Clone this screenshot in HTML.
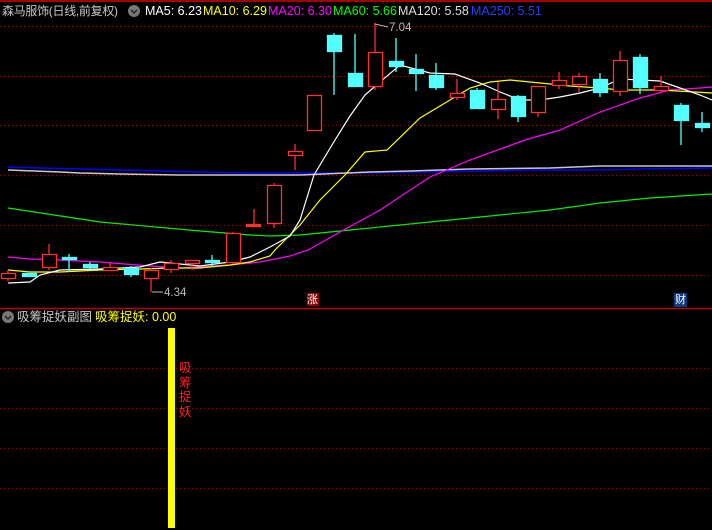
<!DOCTYPE html>
<html><head><meta charset="utf-8"><style>
body{margin:0;background:#000;width:712px;height:530px;overflow:hidden;position:relative;font-family:"Liberation Sans","Noto Sans CJK SC",sans-serif;}
.t{position:absolute;font-size:12.5px;white-space:nowrap;line-height:14px;}
</style></head><body>
<svg width="712" height="530" style="position:absolute;left:0;top:0">
<line x1="0" y1="1" x2="712" y2="1" stroke="#a00000" stroke-width="2"/>
<g stroke="#900" stroke-dasharray="1,3" stroke-width="1">
<line x1="0" y1="26.5" x2="712" y2="26.5"/><line x1="0" y1="76.5" x2="712" y2="76.5"/>
<line x1="0" y1="125.5" x2="712" y2="125.5"/><line x1="0" y1="175.5" x2="712" y2="175.5"/>
<line x1="0" y1="225.5" x2="712" y2="225.5"/><line x1="0" y1="275.5" x2="712" y2="275.5"/>
<line x1="0" y1="368.5" x2="712" y2="368.5"/><line x1="0" y1="408.5" x2="712" y2="408.5"/>
<line x1="0" y1="448.5" x2="712" y2="448.5"/><line x1="0" y1="488.5" x2="712" y2="488.5"/>
</g>
<line x1="0" y1="308.5" x2="712" y2="308.5" stroke="#c00000" stroke-width="1.5"/>
<g fill="none" stroke-width="1.2">
<polyline stroke="#0000ff" stroke-width="1.5" points="8,167 40,168 80,169 120,170 160,171 200,172 245,173 300,173 360,173 420,172 480,171 530,170 590,170 640,169 712,168"/>
<polyline stroke="#c8c8c8" stroke-width="1.5" points="8,170 60,172 80,173 120,174 180,175 300,175 370,172 410,171 470,169 550,168 600,166 640,166 712,166"/>
<polyline stroke="#00ee00" points="8,208 100,222 200,231 250,235 270,236 300,235 350,230 400,225 450,220 500,215 550,210 600,203 650,198 712,194"/>
<polyline stroke="#ff00ff" points="8,257 30,259 60,260 100,262 150,266 180,268 230,265 260,262 290,256 308,250 340,232 380,210 430,177 470,160 525,140 560,130 600,112 640,98 670,90 700,88 712,87"/>
<polyline stroke="#ffff00" points="8,270 30,272 60,272 100,270 140,269 170,268 200,268 230,265 250,262 270,256 275,250 300,225 320,200 345,175 365,152 387,150 420,118 450,100 470,88 490,82 510,80 540,83 570,86 600,88 620,90 660,90 712,93"/>
<polyline stroke="#ffffff" points="8,283 30,282 40,275 60,270 100,269 140,267 160,262 200,266 230,262 250,257 270,247 290,236 300,220 314,175 335,140 350,116 365,95 380,82 400,65 430,73 455,74 480,83 500,92 520,100 540,100 560,97 580,93 600,88 620,79 640,80 660,81 680,88 700,95 712,100"/>
</g>
<g stroke-width="1.3">
<g fill="#000" stroke="#ff3030">
<line x1="8" y1="270" x2="8" y2="281"/><rect x="1.5" y="273.5" width="14" height="5"/>
<line x1="49" y1="244" x2="49" y2="270"/><rect x="42.5" y="254.5" width="14" height="13"/>
<line x1="110" y1="263" x2="110" y2="269"/><rect x="103.5" y="267.5" width="14" height="3"/>
<line x1="151" y1="268" x2="151" y2="292"/><rect x="144.5" y="270.5" width="14" height="8"/>
<line x1="171" y1="260" x2="171" y2="273"/><rect x="164.5" y="263.5" width="14" height="6"/>
<line x1="192" y1="260" x2="192" y2="270"/><rect x="185.5" y="260.5" width="14" height="3"/>
<line x1="233" y1="232" x2="233" y2="264"/><rect x="226.5" y="233.5" width="14" height="29"/>
<line x1="254" y1="209" x2="254" y2="226"/><rect x="246.5" y="224.5" width="14" height="2" fill="#ff3030"/>
<line x1="274" y1="183" x2="274" y2="228"/><rect x="267.5" y="185.5" width="14" height="38"/>
<line x1="295" y1="144" x2="295" y2="170"/><rect x="288.5" y="151.5" width="14" height="4"/>
<rect x="307.5" y="95.5" width="14" height="35"/>
<line x1="375" y1="23" x2="375" y2="90"/><rect x="368.5" y="52.5" width="14" height="34"/>
<line x1="457" y1="79" x2="457" y2="100"/><rect x="450.5" y="93.5" width="14" height="4"/>
<line x1="498" y1="82" x2="498" y2="119"/><rect x="491.5" y="99.5" width="14" height="10"/>
<line x1="538" y1="86" x2="538" y2="117"/><rect x="531.5" y="86.5" width="14" height="26"/>
<line x1="559" y1="72" x2="559" y2="89"/><rect x="552.5" y="80.5" width="14" height="5"/>
<line x1="579" y1="73" x2="579" y2="92"/><rect x="572.5" y="76.5" width="14" height="8"/>
<line x1="620" y1="51" x2="620" y2="96"/><rect x="613.5" y="60.5" width="14" height="31"/>
<line x1="661" y1="76" x2="661" y2="92"/><rect x="654.5" y="86.5" width="14" height="4"/>
</g>
<g fill="#54ffff" stroke="#54ffff">
<rect x="22.5" y="273.5" width="14" height="3"/>
<line x1="69" y1="254" x2="69" y2="272"/><rect x="62.5" y="257.5" width="14" height="2"/>
<line x1="90" y1="262" x2="90" y2="269"/><rect x="83.5" y="264.5" width="14" height="3"/>
<line x1="131" y1="266" x2="131" y2="277"/><rect x="124.5" y="268.5" width="14" height="6"/>
<line x1="212" y1="255" x2="212" y2="266"/><rect x="205.5" y="260.5" width="14" height="2"/>
<line x1="334" y1="33" x2="334" y2="95"/><rect x="327.5" y="35.5" width="14" height="16"/>
<line x1="355" y1="34" x2="355" y2="86"/><rect x="348.5" y="73.5" width="14" height="13"/>
<line x1="396" y1="38" x2="396" y2="72"/><rect x="389.5" y="61.5" width="14" height="5"/>
<line x1="416" y1="54" x2="416" y2="91"/><rect x="409.5" y="69.5" width="14" height="4"/>
<line x1="436" y1="63" x2="436" y2="90"/><rect x="429.5" y="75.5" width="14" height="12"/>
<line x1="477" y1="88" x2="477" y2="108"/><rect x="470.5" y="90.5" width="14" height="18"/>
<line x1="518" y1="95" x2="518" y2="122"/><rect x="511.5" y="96.5" width="14" height="20"/>
<line x1="600" y1="73" x2="600" y2="97"/><rect x="593.5" y="79.5" width="14" height="13"/>
<line x1="640" y1="54" x2="640" y2="94"/><rect x="633.5" y="57.5" width="14" height="30"/>
<line x1="681" y1="103" x2="681" y2="145"/><rect x="674.5" y="105.5" width="14" height="15"/>
<line x1="702" y1="112" x2="702" y2="132"/><rect x="695.5" y="123.5" width="14" height="4"/>
</g>
</g>
<g stroke="#bbb" fill="none" stroke-width="1"><line x1="152" y1="292" x2="163" y2="292"/><line x1="375" y1="24" x2="388" y2="27"/></g>
<rect x="168" y="328" width="7" height="200" fill="#ffff00"/>
<circle cx="134" cy="11" r="6" fill="#777"/><path d="M131 10 L134 13 L137 10" stroke="#222" stroke-width="1.5" fill="none"/>
<circle cx="8" cy="317" r="6" fill="#777"/><path d="M5 316 L8 319 L11 316" stroke="#222" stroke-width="1.5" fill="none"/>
<rect x="307" y="293" width="12" height="13" fill="#8a0000"/>
<rect x="674" y="293" width="13" height="14" fill="#0a3c80"/>
</svg>
<div class="t" style="left:2px;top:4px;color:#c8c8c8;font-size:12px;letter-spacing:-0.3px">森马服饰(日线,前复权)</div>
<div class="t" style="left:145px;top:4px;color:#fff">MA5: 6.23</div>
<div class="t" style="left:203px;top:4px;color:#ffff00">MA10: 6.29</div>
<div class="t" style="left:268px;top:4px;color:#ff00ff">MA20: 6.30</div>
<div class="t" style="left:333px;top:4px;color:#00ff00">MA60: 5.66</div>
<div class="t" style="left:398px;top:4px;color:#ddd">MA120: 5.58</div>
<div class="t" style="left:471px;top:4px;color:#2040ff">MA250: 5.51</div>
<div class="t" style="left:389px;top:21px;color:#bbb;font-size:11.5px">7.04</div>
<div class="t" style="left:164px;top:286px;color:#bbb;font-size:11.5px">4.34</div>
<div class="t" style="left:307px;top:293px;color:#fff;font-size:11px">涨</div>
<div class="t" style="left:675px;top:293px;color:#fff;font-size:11px">财</div>
<div class="t" style="left:17px;top:310px;color:#c8c8c8">吸筹捉妖副图</div>
<div class="t" style="left:95px;top:310px;color:#ffff00">吸筹捉妖: 0.00</div>
<div class="t" style="left:179px;top:361px;color:#ff2020;width:13px;white-space:normal;line-height:14.5px;font-size:12.5px">吸筹捉妖</div>
</body></html>
